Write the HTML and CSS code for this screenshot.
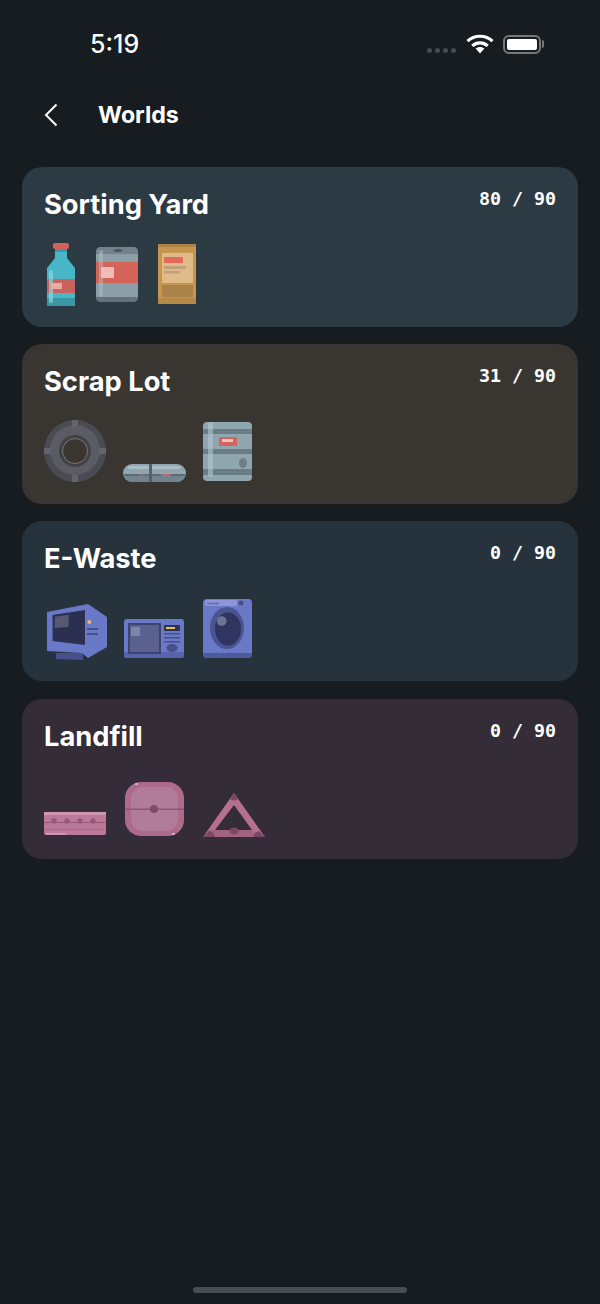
FILE: index.html
```html
<!DOCTYPE html>
<html>
<head>
	<title>Worlds</title>
	<link rel="stylesheet" href="styles.css">
</head>
<body>

<div class="page">
	<div class="status">
		<span class="time">5:19</span>
		<div class="status-icons">
			<div class="dots"><i></i><i></i><i></i><i></i></div>
			<svg class="wifi" width="28" height="20" viewBox="0 0 28 20">
				<path d="M1.5 7.2C8.5 .6 19.5 .6 26.5 7.2" fill="none" stroke="#fff" stroke-width="3.2"/>
				<path d="M6.3 11.8C10.6 7.8 17.4 7.8 21.7 11.8" fill="none" stroke="#fff" stroke-width="3.2"/>
				<path d="M9.6 14.6C12.2 12.4 15.8 12.4 18.4 14.6L14 19.4Z" fill="#fff"/>
			</svg>
			<div class="battery"><div class="battery-fill"></div></div>
		</div>
	</div>

	<div class="nav">
		<svg class="back" width="14" height="24" viewBox="0 0 14 24">
			<path d="M12.5 1.5L2 12L12.5 22.5" fill="none" stroke="#fff" stroke-width="2"/>
		</svg>
		<h1>Worlds</h1>
	</div>

	<div class="cards">

		<div class="card yard">
			<div class="card-head">
				<h2>Sorting Yard</h2>
				<span class="count">80 / 90</span>
			</div>
			<div class="items">
				<!-- bottle -->
				<svg width="35" height="66" viewBox="0 0 35 66">
					<path d="M11 8H23V17L31 27V65H3V27L11 17Z" fill="#47b6c6"/>
					<rect x="11" y="8" width="12" height="3" fill="#3a98a8"/>
					<rect x="9" y="2" width="16" height="6" rx="2" fill="#d5625a"/>
					<rect x="3" y="38" width="28" height="14" fill="#c7625c"/>
					<rect x="3" y="57" width="28" height="8" fill="#3b97a6"/>
					<rect x="5" y="29" width="4" height="33" rx="2" fill="#8bd0da" opacity=".75"/>
					<rect x="7" y="42" width="11" height="6" fill="#e8a9a5"/>
				</svg>
				<!-- can -->
				<svg width="45" height="66" viewBox="0 0 45 66">
					<rect x="0" y="6" width="42" height="55" rx="5" fill="#8c9ea8"/>
					<path d="M0 11a5 5 0 0 1 5-5H37a5 5 0 0 1 5 5V13H0Z" fill="#73838d"/>
					<ellipse cx="22" cy="9.500" rx="4.500" ry="1.500" fill="#4c5a63"/>
					<path d="M0 56H42A5 5 0 0 1 37 61H5A5 5 0 0 1 0 56Z" fill="#63727c"/>
					<rect x="0" y="21" width="42" height="21" fill="#d4645a"/>
					<rect x="3" y="9" width="4" height="47" rx="2" fill="#b4c3cb" opacity=".45"/>
					<rect x="5" y="26" width="13" height="11" rx="1" fill="#efbcb8"/>
				</svg>
				<!-- bag -->
				<svg width="40" height="66" viewBox="0 0 40 66">
					<rect x="0" y="3" width="38" height="60" fill="#c6964f"/>
					<rect x="0" y="3" width="38" height="3" fill="#ae8344"/>
					<rect x="0" y="57" width="38" height="6" fill="#b58a47"/>
					<rect x="4" y="12" width="31" height="30" fill="#dfbb8a"/>
					<rect x="6" y="16" width="19" height="6" fill="#e3695a"/>
					<rect x="6" y="25" width="22" height="3" fill="#bfa27c"/>
					<rect x="6" y="30" width="16" height="2.500" fill="#bfa27c"/>
					<rect x="4" y="44" width="31" height="12" fill="#a9824a"/>
				</svg>
			</div>
		</div>

		<div class="card scrap">
			<div class="card-head">
				<h2>Scrap Lot</h2>
				<span class="count">31 / 90</span>
			</div>
			<div class="items">
				<!-- tyre -->
				<svg width="62" height="66" viewBox="0 0 62 66">
					<circle cx="31" cy="33" r="31" fill="#4b4b53"/>
					<circle cx="31" cy="32" r="25" fill="#5b5b63"/>
					<rect x="28" y="2" width="6" height="7" fill="#63636b"/>
					<rect x="28" y="57" width="6" height="7" fill="#63636b"/>
					<rect x="0" y="30" width="7" height="6" fill="#63636b"/>
					<rect x="55" y="30" width="7" height="6" fill="#63636b"/>
					<circle cx="31" cy="33" r="16" fill="#414148"/>
					<circle cx="31" cy="33" r="12.500" fill="#3a362f" stroke="#77776f" stroke-width="1"/>
				</svg>
				<!-- pipe -->
				<svg width="63" height="66" viewBox="0 0 63 66">
					<rect x="0" y="46" width="63" height="18" rx="9" fill="#8fa6af"/>
					<rect x="5" y="48" width="53" height="3" rx="1.500" fill="#a9bcc4"/>
					<path d="M1 56H62A9 9 0 0 1 54 64H9A9 9 0 0 1 1 56Z" fill="#71848d"/>
					<rect x="1" y="56" width="61" height="2" fill="#5b6c75"/>
					<rect x="26" y="46" width="3" height="18" fill="#52626b"/>
					<rect x="16" y="56.500" width="6" height="1.500" fill="#a86a66"/>
					<rect x="38" y="56" width="10" height="2" fill="#b8696a"/>
				</svg>
				<!-- metal box -->
				<svg width="49" height="66" viewBox="0 0 49 66">
					<rect x="0" y="4" width="49" height="59" rx="4" fill="#8fa6af"/>
					<rect x="0" y="11" width="49" height="5" fill="#6a7d86"/>
					<rect x="0" y="31" width="49" height="5" fill="#6a7d86"/>
					<rect x="0" y="51" width="49" height="6" fill="#6a7d86"/>
					<rect x="5" y="4" width="5" height="55" rx="2" fill="#b3c6ce" opacity=".6"/>
					<rect x="16" y="19" width="18" height="9" fill="#d6635c"/>
					<rect x="19" y="21" width="11" height="3" fill="#f0c4bf"/>
					<ellipse cx="40" cy="45" rx="4" ry="5" fill="#6d7f88"/>
				</svg>
			</div>
		</div>

		<div class="card ewaste">
			<div class="card-head">
				<h2>E-Waste</h2>
				<span class="count">0 / 90</span>
			</div>
			<div class="items">
				<!-- computer -->
				<svg width="62" height="66" viewBox="0 0 62 66">
					<path d="M12 58H39V65L12 64Z" fill="#47508c"/>
					<path d="M3 17L44 9L63 22V52L44 63L38 58L3 56Z" fill="#6a78c8"/>
					<path d="M8.600 20L41 15V50L8.600 46Z" fill="#2b2f50"/>
					<path d="M10.700 21.700L24.700 19.700V32L10.700 33Z" fill="#555a72"/>
					<circle cx="45.300" cy="27" r="2" fill="#e3c05c"/>
					<rect x="43" y="33" width="11" height="2" fill="#47508c"/>
					<rect x="43" y="38" width="11" height="2" fill="#47508c"/>
				</svg>
				<!-- microwave -->
				<svg width="63" height="66" viewBox="0 0 63 66">
					<rect x="1" y="24" width="60" height="39" rx="3" fill="#6a78c8"/>
					<path d="M1 57H61V60a3 3 0 0 1-3 3H4a3 3 0 0 1-3-3Z" fill="#5763ac"/>
					<rect x="5" y="28" width="33" height="31" fill="#3e4470"/>
					<rect x="7" y="30" width="29" height="27" fill="#5a618e"/>
					<rect x="8" y="32" width="9" height="9" fill="#7e85ac"/>
					<rect x="41" y="30" width="16" height="6" rx="1" fill="#2e3358"/>
					<rect x="43" y="32" width="9" height="2" fill="#e3c05c"/>
					<rect x="41" y="38" width="16" height="1.500" fill="#47508c"/>
					<rect x="41" y="42" width="16" height="1.500" fill="#47508c"/>
					<rect x="41" y="46" width="16" height="1.500" fill="#47508c"/>
					<ellipse cx="49" cy="53" rx="5.500" ry="4" fill="#46508a"/>
				</svg>
				<!-- washer -->
				<svg width="49" height="66" viewBox="0 0 49 66">
					<rect x="0" y="4" width="49" height="59" rx="4" fill="#6a78c8"/>
					<path d="M0 58H49V59a4 4 0 0 1-4 4H4a4 4 0 0 1-4-4Z" fill="#4f5a9c"/>
					<rect x="2" y="5" width="32" height="6" rx="1" fill="#8c96d8"/>
					<rect x="4" y="7.500" width="12" height="2" fill="#6a74b4"/>
					<circle cx="38" cy="8" r="2.500" fill="#454f88"/>
					<ellipse cx="24" cy="33" rx="17" ry="21" fill="#4a5490"/>
					<ellipse cx="25" cy="34" rx="13" ry="16.500" fill="#2f3560"/>
					<circle cx="18.700" cy="26" r="4.800" fill="#6e7390"/>
				</svg>
			</div>
		</div>

		<div class="card landfill">
			<div class="card-head">
				<h2>Landfill</h2>
				<span class="count">0 / 90</span>
			</div>
			<div class="items">
				<!-- slab -->
				<svg width="62" height="66" viewBox="0 0 62 66">
					<rect x="0" y="39" width="62" height="23" rx="2" fill="#bc7899"/>
					<rect x="0" y="39" width="62" height="3" fill="#d095b0"/>
					<rect x="0" y="49" width="62" height="1" fill="#96587a"/>
					<rect x="0" y="56" width="62" height="1" fill="#a8698a"/>
					<rect x="2" y="60" width="20" height="1.500" fill="#d3a0b7"/>
					<circle cx="10" cy="48" r="2.700" fill="#96587a"/>
					<circle cx="23" cy="48" r="2.700" fill="#96587a"/>
					<circle cx="36" cy="48" r="2.700" fill="#96587a"/>
					<circle cx="49" cy="48" r="2.700" fill="#96587a"/>
				</svg>
				<!-- lid -->
				<svg width="63" height="66" viewBox="0 0 63 66">
					<rect x="2" y="9" width="59" height="54" rx="16" fill="#ad6a8d"/>
					<rect x="8" y="14" width="47" height="44" rx="12" fill="#b17c98"/>
					<rect x="2" y="35.500" width="59" height="1.500" fill="#8e5576"/>
					<circle cx="31" cy="36" r="4" fill="#7e4b68"/>
					<rect x="12" y="10" width="3" height="2" fill="#d6aebe"/>
					<rect x="49" y="60" width="3" height="2" fill="#d6aebe"/>
				</svg>
				<!-- triangle -->
				<svg width="62" height="66" viewBox="0 0 62 66">
					<path d="M31 20L62 64H0ZM31 32L12 57H49Z" fill="#b5708f" fill-rule="evenodd"/>
					<path d="M12 57H49L54 64H1L6 57Z" fill="#a3637f"/>
					<path d="M31 20L35 26Q31 29 27 26Z" fill="#7a4a64"/>
					<path d="M6 58Q11 59 12 64H0Z" fill="#7a4a64"/>
					<path d="M56 58Q51 59 50 64H62Z" fill="#7a4a64"/>
					<ellipse cx="31" cy="58" rx="4.500" ry="3.500" fill="#7a4a64"/>
				</svg>
			</div>
		</div>

	</div>

	<div class="home-bar"></div>
</div>

</body>
</html>
```

FILE: styles.css
```css
body{ margin: 0; padding: 0; background-color: #171c20; color: #fff; font-family: Inter, "Liberation Sans", sans-serif; }
h1, h2{ margin: 0; }

.page{ display: flex; flex-direction: column; height: 1304px; overflow: hidden; }

.status{ display: flex; justify-content: space-between; align-items: center; height: 34px; padding: 27px 56px 0 90px; }
.time{ font-size: 25px; font-weight: 500; line-height: 34px; }
.status-icons{ display: flex; align-items: center; }
.dots{ display: flex; gap: 3px; margin: 13px 10px 0 0; }
.dots i{ display: block; width: 5px; height: 5px; border-radius: 50%; background-color: #484b4e; }
.wifi{ display: block; margin-right: 9px; }
.battery{ position: relative; box-sizing: border-box; width: 38px; height: 19px; margin-right: 3px; padding: 2px; border: 2px solid #75787b; border-radius: 6px; }
.battery::after{ content: ""; position: absolute; right: -5px; top: 3.500px; width: 2px; height: 8px; border-radius: 0 2px 2px 0; background-color: #75787b; }
.battery-fill{ height: 100%; border-radius: 2px; background-color: #fff; }

.nav{ display: flex; align-items: center; height: 40px; margin-top: 34px; padding-left: 44px; }
.back{ display: block; margin-right: 41px; }
.nav h1{ font-size: 23.200px; font-weight: 700; line-height: 30px; margin-left: -1px; }

.cards{ display: flex; flex-direction: column; gap: 17.200px; margin-top: 32px; padding: 0 22px; }
.card{ height: 160px; box-sizing: border-box; padding: 21px 22px 0; border-radius: 20px; }
.yard{ background-color: #2c3a44; }
.scrap{ background-color: #393530; }
.ewaste{ background-color: #27333c; }
.landfill{ background-color: #342c37; }

.card-head{ display: flex; justify-content: space-between; align-items: flex-start; }
.card-head h2{ font-size: 27.300px; font-weight: 700; line-height: 34px; }
.count{ font-family: "DejaVu Sans Mono", "Liberation Mono", monospace; font-size: 18.300px; font-weight: 700; line-height: 22px; }

.items{ display: flex; gap: 17px; margin-top: 19px; }
.items svg{ display: block; overflow: visible; }

.home-bar{ width: 214px; height: 6px; margin: auto auto 11px; border-radius: 3px; background-color: #4a4d50; }
```
